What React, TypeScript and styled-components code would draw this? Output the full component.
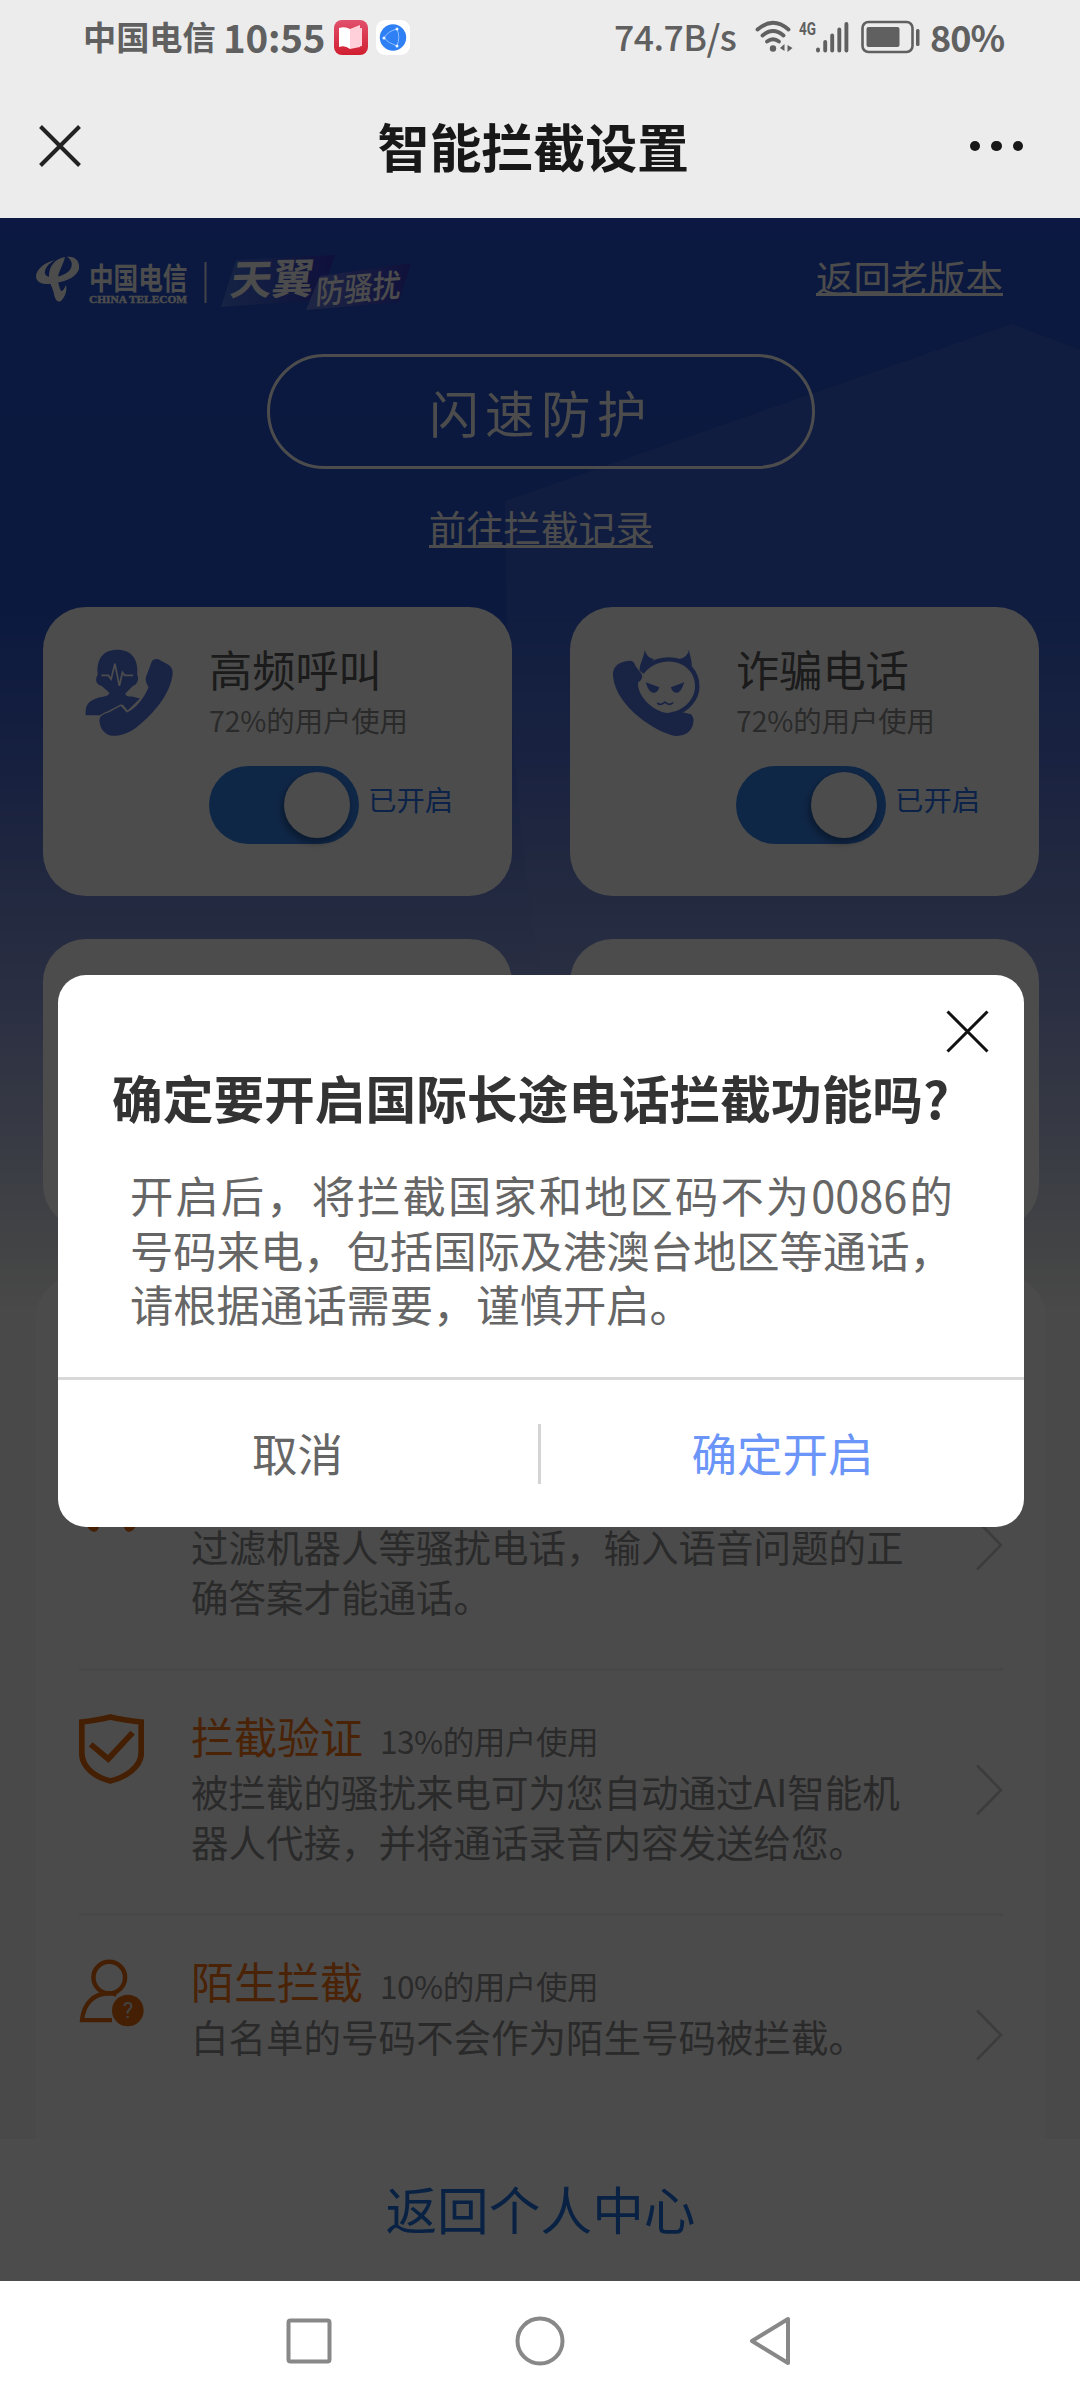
import React from "react";
import styled, { createGlobalStyle } from "styled-components";

const GlobalStyle = createGlobalStyle`
  * { box-sizing: border-box; }
  body {
    margin: 0;
    background: #fff;
    font-family: "Noto Sans CJK SC", "Noto Sans", sans-serif;
  }
`;

const Screen = styled.div`
  width: 1080px;
  height: 2400px;
  display: flex;
  flex-direction: column;
  white-space: nowrap;
`;

/* ---------- status bar and title bar ---------- */

const StatusBar = styled.div`
  height: 74px;
  padding: 0 77px 0 83px;
  display: flex;
  align-items: center;
  justify-content: space-between;
  background: #ececec;
  color: #606060;
`;

const StatusGroup = styled.div`
  display: flex;
  align-items: center;
`;

const StatusText = styled.span<{ $size: number; $width: number; $weight?: number; $gap?: number; $spacing?: number }>`
  width: ${(p) => p.$width}px;
  margin-left: ${(p) => p.$gap ?? 0}px;
  font-size: ${(p) => p.$size}px;
  font-weight: ${(p) => p.$weight ?? 500};
  letter-spacing: ${(p) => p.$spacing ?? 0}px;
  line-height: 70px;
  height: 73px;
`;

const StatusIcon = styled.svg<{ $gap?: number }>`
  margin-left: ${(p) => p.$gap ?? 0}px;
  flex: none;
`;

const TitleBar = styled.header`
  height: 144px;
  padding: 0 57px 0 39px;
  display: flex;
  align-items: center;
  justify-content: space-between;
  background: #ececec;
`;

const BarTitle = styled.h1`
  margin: 0;
  padding-left: 16px;
  font-size: 52px;
  line-height: 136px;
  font-weight: 700;
  letter-spacing: -0.1px;
  color: #181818;
`;

const More = styled.div`
  display: flex;
  gap: 11px;
  span {
    width: 10.5px;
    height: 10.5px;
    border-radius: 50%;
    background: #181818;
  }
`;

/* ---------- page ---------- */

const Page = styled.main`
  position: relative;
  height: 2063px;
  overflow: hidden;
  background: linear-gradient(
    180deg,
    #2850dc 0px,
    #2553d2 60px,
    #2654d2 380px,
    #4a6ad4 540px,
    #7088d4 670px,
    #909ede 790px,
    #c8d0e6 960px,
    #dde0e6 1020px,
    #f3f3f3 1090px
  );
`;

const Backdrop = styled.svg`
  position: absolute;
  left: 0;
  top: 0;
`;

const PageBody = styled.div`
  position: relative;
  display: flex;
  flex-direction: column;
  align-items: center;
`;

const BrandRow = styled.div`
  align-self: stretch;
  height: 136px;
  padding: 22px 77px 0 36px;
  display: flex;
  justify-content: space-between;
  align-items: flex-start;
`;

const TextLink = styled.a`
  color: #fff;
  font-size: 37.4px;
  border-bottom: 3px solid #fff;
`;

const BrandLink = styled(TextLink)`
  height: 38px;
  line-height: 38px;
  margin-top: 18px;
`;

const RecordLink = styled(TextLink)`
  margin: 39px 0 0 2px;
  height: 40px;
  line-height: 39px;
`;

const ShieldButton = styled.button`
  width: 548px;
  height: 115px;
  margin-left: 2px;
  padding: 0;
  border: 3px solid #fff;
  border-radius: 58px;
  background: none;
  color: #fff;
  font-family: inherit;
  font-size: 49.5px;
  line-height: 105px;
  letter-spacing: 6.4px;
`;

const CardGrid = styled.section`
  align-self: stretch;
  margin-top: 59px;
  padding: 0 41px 0 43px;
  display: grid;
  grid-template-columns: 469px 469px;
  grid-auto-rows: 289px;
  gap: 43px 58px;
`;

const Card = styled.article`
  padding: 42px 0 0 42px;
  border-radius: 43px;
  background: #fff;
  display: flex;
  gap: 36px;
`;

const CardBody = styled.div`
  display: flex;
  flex-direction: column;
`;

const CardName = styled.h2`
  margin: -4px 0 0;
  font-size: 43.2px;
  line-height: 46px;
  font-weight: 400;
  color: #5a5a5a;
`;

const CardUsage = styled.p`
  margin: 9px 0 0;
  font-size: 28.4px;
  line-height: 40px;
  letter-spacing: -0.1px;
  color: #8e8e8e;
`;

const SwitchRow = styled.div`
  margin-top: 26px;
  height: 78px;
  display: flex;
  align-items: flex-start;
  gap: 9px;
  color: #2874f0;
  font-size: 28.4px;
  line-height: 66px;
`;

const Switch = styled.span`
  width: 150px;
  height: 78px;
  padding: 6px 9px;
  border-radius: 39px;
  background: #3583ee;
  display: flex;
  justify-content: flex-end;
`;

const Knob = styled.span`
  width: 66px;
  height: 66px;
  border-radius: 50%;
  background: #fff;
  box-shadow: -2px 4px 8px rgba(0, 0, 0, 0.4);
`;

const List = styled.section`
  align-self: stretch;
  height: 920px;
  margin: 47px 34px 0 36px;
  padding: 151px 43px 0;
  border-radius: 43px;
  background: #fcfcfc;
`;

const ListItem = styled.div<{ $last?: boolean }>`
  height: 245px;
  padding-top: 44px;
  display: flex;
  border-bottom: ${(p) => (p.$last ? "none" : "3px solid #eeeeee")};
`;

const ItemIcon = styled.div`
  width: 112px;
  margin-top: -1px;
`;

const ItemBody = styled.div`
  flex: 1;
`;

const ItemHead = styled.div`
  display: flex;
  align-items: baseline;
  gap: 17px;
  height: 48px;
  line-height: 40px;
`;

const ItemName = styled.h3`
  margin: 0;
  font-size: 43px;
  font-weight: 400;
  color: #f87414;
`;

const ItemUsage = styled.span`
  font-size: 31.6px;
  letter-spacing: -0.5px;
  color: #8c8c8c;
`;

const ItemText = styled.p`
  margin: 3px 0 0;
  font-size: 37.5px;
  line-height: 50px;
  color: #8c8c8c;
`;

const ItemArrow = styled.svg`
  margin-top: 49px;
`;

const Footer = styled.footer`
  position: absolute;
  left: 0;
  right: 0;
  bottom: 0;
  height: 142px;
  padding-left: 1px;
  display: flex;
  justify-content: center;
  background: #fff;
  color: #2074e4;
  font-size: 51.7px;
  line-height: 138px;
`;

/* ---------- dialog ---------- */

const Mask = styled.div`
  position: absolute;
  inset: 0;
  background: rgba(0, 0, 0, 0.7);
  display: flex;
  justify-content: center;
  align-items: flex-start;
  padding: 757px 0 0 2px;
`;

const Dialog = styled.div`
  width: 966px;
  height: 552px;
  border-radius: 28px;
  background: #fff;
  display: flex;
  flex-direction: column;
`;

const DialogClose = styled.div`
  height: 77px;
  padding: 35px 35px 0 0;
  display: flex;
  justify-content: flex-end;
`;

const DialogTitle = styled.h2`
  margin: 13px 0 0 54px;
  font-size: 50.7px;
  line-height: 64px;
  font-weight: 700;
  color: #333;
`;

const DialogText = styled.p`
  width: 822.8px;
  height: 210px;
  margin: 38px 0 0 72px;
  font-size: 43.3px;
  line-height: 54.5px;
  text-align: justify;
  white-space: normal;
  color: #666;
`;

const DialogActions = styled.div`
  flex: 1;
  display: flex;
  align-items: center;
  border-top: 3px solid #d8d8d8;
`;

const Action = styled.button<{ $primary?: boolean }>`
  flex: 1;
  padding: 0 0 4px;
  border: 0;
  background: none;
  font-family: inherit;
  font-size: 45.5px;
  line-height: 64px;
  color: ${(p) => (p.$primary ? "#6b95f8" : "#666")};
`;

const CancelAction = styled(Action)`
  flex: 0 0 480px;
  padding-right: 1px;
`;

const Separator = styled.span`
  width: 3px;
  height: 60px;
  background: #d4d4d4;
`;

const NavBar = styled.nav`
  height: 119px;
  padding: 0 288px 0 286px;
  display: flex;
  align-items: center;
  justify-content: space-between;
  background: #fff;
`;

/* ---------- drawings ---------- */

const BLUE = "#5578e6";
const ORANGE = "#e46a0e";

const Cross = ({ size, width, color }: { size: number; width: number; color: string }) => (
  <svg width={size} height={size} viewBox={`0 0 ${size} ${size}`}>
    <path
      d={`M1.5 1.5 L${size - 1.5} ${size - 1.5} M${size - 1.5} 1.5 L1.5 ${size - 1.5}`}
      stroke={color}
      strokeWidth={width}
      fill="none"
    />
  </svg>
);

const BookApp = () => (
  <StatusIcon $gap={9} width="34" height="35" viewBox="0 0 34 35">
    <defs>
      <linearGradient id="book" x1="0" y1="0" x2="0" y2="1">
        <stop offset="0" stopColor="#e2506c" />
        <stop offset="1" stopColor="#d01f30" />
      </linearGradient>
    </defs>
    <rect width="34" height="35" rx="8" fill="url(#book)" />
    <path d="M16 9 L26 5 V27 L16 29Z M18 9 L28 8 V26 L18 28Z" fill="#ffd0da" />
    <path d="M5 8 Q11 6 16 9 V29 Q11 25 5 27Z" fill="#fff" />
  </StatusIcon>
);

const BrowserApp = () => (
  <StatusIcon $gap={8} width="34" height="35" viewBox="0 0 34 35">
    <rect width="34" height="35" rx="9" fill="#fff" />
    <circle cx="17" cy="17.5" r="13.2" fill="#2f80f5" />
    <path d="M21 9 Q12 11 8 18 Q12 23 21 26 Q24.500 17 21 9" fill="none" stroke="#8cc0ff" strokeWidth="1" />
    <circle cx="21" cy="9" r="1.500" fill="#e8f4ff" />
    <circle cx="8" cy="18" r="1.500" fill="#e8f4ff" />
    <circle cx="21" cy="26" r="1.500" fill="#e8f4ff" />
  </StatusIcon>
);

const Wifi = () => (
  <StatusIcon $gap={20} width="40" height="34" viewBox="0 0 40 34">
    <g fill="none" stroke="#606060" strokeWidth="3.800" strokeLinecap="round">
      <path d="M2.500 9.500 Q18 -4 33.500 9.500" />
      <path d="M7.500 15.500 Q18 6.500 28.500 15.500" />
      <path d="M12 21.500 Q18 17 24 21.500" />
    </g>
    <circle cx="18" cy="28.500" r="3.200" fill="#606060" />
    <path d="M29.500 24 V31 L25 28Z M32.500 25 V32 L37.500 28Z" fill="#606060" />
  </StatusIcon>
);

const Signal = () => (
  <StatusIcon $gap={4} width="52" height="34" viewBox="0 0 52 34">
    <text x="0" y="15" fontSize="18" fontWeight="700" textLength="17" lengthAdjust="spacingAndGlyphs" fill="#606060" fontFamily="Roboto, sans-serif">
      4G
    </text>
    <g stroke="#606060" strokeWidth="3.900" strokeLinecap="round">
      <path d="M19 29.500 V30.500 M26.200 22 V30.500 M33.200 15.500 V30.500 M40.300 9.500 V30.500 M47.400 4 V30.500" />
    </g>
  </StatusIcon>
);

const Battery = () => (
  <StatusIcon $gap={10} width="60" height="34" viewBox="0 0 60 34">
    <rect x="1.500" y="2" width="50" height="30" rx="6" fill="none" stroke="#606060" strokeWidth="2.600" />
    <rect x="5.500" y="7" width="33" height="20" rx="2" fill="#606060" />
    <rect x="55" y="9" width="3.500" height="17" rx="1.500" fill="#606060" />
  </StatusIcon>
);

const BrandLogo = () => (
  <svg width="380" height="84" viewBox="0 -10 380 84" fontFamily='"Noto Sans CJK SC", sans-serif'>
    <defs>
      <linearGradient id="tagA" x1="0" y1="0" x2="1" y2="0">
        <stop offset="0" stopColor="#5a8af0" />
        <stop offset="1" stopColor="#3a28c0" />
      </linearGradient>
      <linearGradient id="tagB" x1="0" y1="0" x2="1" y2="0">
        <stop offset="0" stopColor="#7c90ee" />
        <stop offset="1" stopColor="#3a30c4" />
      </linearGradient>
    </defs>
    <g fill="#fff">
      <path d="M19 10 C8 13 0 19 0 27 C1 35 12 35 20 33 C32 31 41 26 43 19 C44 11 39 6 31 7 C37 10 37 17 33 21 C27 27 12 30 9 24 C8 19 12 14 19 10Z" />
      <path d="M29 7 C18 9 13 17 13 26 C13 33 17 38 18 44 C19 50 22 53 25 51 C30 46 31 40 30 35 C28 39 27 41 25 41 C23 37 22 33 22 29 C22 21 27 16 29 7Z" />
    </g>
    <g fill="#fff">
      <g transform="translate(53 0) scale(1 1.22)">
        <text x="0" y="32" fontSize="24.600" fontWeight="700">中国电信</text>
      </g>
      <text x="53" y="53" fontSize="10" fontWeight="700" textLength="98" lengthAdjust="spacingAndGlyphs" fontFamily='"Liberation Serif", serif' stroke="#fff" strokeWidth="0.400">
        CHINA TELECOM
      </text>
      <rect x="168.500" y="12" width="2" height="41" opacity="0.85" />
    </g>
    <path d="M200 10 L299 5 L284 50 L185 57Z" fill="url(#tagA)" opacity="0.65" />
    <path d="M284 26 L375 13 L363 52 L270 60Z" fill="url(#tagB)" opacity="0.75" />
    <g fill="#fff">
      <text transform="translate(193 45) rotate(-1) skewX(-9)" x="0" y="0" fontSize="41.500" fontWeight="700">天翼</text>
      <text transform="translate(279 54) rotate(-5) skewX(-9) scale(1 1.12)" x="0" y="0" fontSize="28.500" fontWeight="500">防骚扰</text>
    </g>
  </svg>
);

const CallerIcon = () => (
  <svg width="88" height="87" viewBox="248 208 256 260" preserveAspectRatio="none">
    <path
      fill={BLUE}
      d="M285 285 C280 236 302 210 342 210 C382 210 404 236 400 285 C407 298 398 316 388 318 L366 340 C364 347 372 350 384 350 L408 356 L372 392 L358 374 L292 406 L250 406 C248 376 255 364 290 352 C310 350 320 346 318 338 L296 318 C280 315 276 298 285 285Z"
    />
    <path d="M296 287 H316 L324 298 L335 252 L348 318 L357 278 L364 287 H388" fill="none" stroke="#fff" strokeWidth="5" />
    <path
      fill={BLUE}
      stroke="#fff"
      strokeWidth="8"
      paintOrder="stroke"
      d="M443 243 Q454 234 468 242 L492 256 Q504 266 503 282 C497 342 448 402 400 440 C375 460 350 469 325 467 C303 464 290 442 290 422 C290 408 302 402 318 397 L352 378 L370 398 C395 385 420 355 433 322 Q421 306 426 290Z"
    />
  </svg>
);

const DevilIcon = () => (
  <svg width="88" height="87" viewBox="210 208 256 260" preserveAspectRatio="none">
    <path d="M297 278 C345 212 458 232 458 320 C458 355 432 388 396 400" fill="none" stroke={BLUE} strokeWidth="13" />
    <path d="M290 272 C290 250 303 235 305 210 Q310 234 332 238 L300 276Z M404 238 Q430 234 434 210 C436 230 446 245 441 276Z" fill={BLUE} />
    <path
      fill={BLUE}
      d="M213 290 C210 262 228 245 262 243 Q274 243 278 258 L297 284 Q301 297 286 308 C283 342 318 385 362 398 C378 402 388 392 402 394 L440 403 Q450 414 446 432 C440 457 420 468 395 468 C340 458 222 382 213 290Z"
    />
    <path d="M308 307 L348 322 Q342 340 330 339 Q316 336 308 307Z M420 307 L381 322 Q387 340 399 339 Q412 336 420 307Z" fill={BLUE} />
    <path d="M342 369 Q350 379 364 367 Q378 379 388 368" fill="none" stroke={BLUE} strokeWidth="5" />
    <path d="M350 387 L364 376 L378 387 L364 397Z" fill="#fff" />
  </svg>
);

const HeadsetIcon = () => (
  <svg width="65" height="64" viewBox="0 0 65 64" fill="none" stroke={ORANGE} strokeWidth="5.500">
    <path d="M6 40 V28 C8 -4 57 -4 59 28 V40" />
    <ellipse cx="13" cy="49" rx="6" ry="12.500" transform="rotate(-12 13 49)" fill={ORANGE} strokeWidth="3" />
    <ellipse cx="52" cy="49" rx="6" ry="12.500" transform="rotate(12 52 49)" fill={ORANGE} strokeWidth="3" />
  </svg>
);

const ShieldIcon = () => (
  <svg width="65" height="70" viewBox="229 222 189 210" preserveAspectRatio="none" fill="none" stroke={ORANGE}>
    <path d="M237 246 Q285 240 320 231 Q357 240 410 246 V338 C410 384 360 413 320 423 C280 413 237 384 237 338Z" strokeWidth="17" />
    <path d="M263 313 L314 357 L385 278" strokeWidth="17" />
  </svg>
);

const StrangerIcon = () => (
  <svg width="65" height="68" viewBox="229 956 189 198" preserveAspectRatio="none">
    <g fill="none" stroke={ORANGE} strokeWidth="13">
      <ellipse cx="317" cy="1010" rx="46" ry="46" />
      <path d="M325 1134 H238 C242 1088 270 1056 317 1056 Q330 1056 338 1060" />
    </g>
    <circle cx="371" cy="1106" r="46" fill={ORANGE} />
    <text x="371" y="1129" textAnchor="middle" fontSize="64" fill="#ddd" fontFamily="Roboto, sans-serif">
      ?
    </text>
  </svg>
);

const Arrow = () => (
  <ItemArrow width="27" height="52" viewBox="0 0 27 52">
    <path d="M1 1.500 L25 26 L1 50.500" fill="none" stroke="#c8c8c8" strokeWidth="2.600" />
  </ItemArrow>
);

/* ---------- content ---------- */

const cards = [
  { name: "高频呼叫", icon: <CallerIcon /> },
  { name: "诈骗电话", icon: <DevilIcon /> },
];

const items = [
  { name: "", usage: "", lines: ["过滤机器人等骚扰电话，输入语音问题的正", "确答案才能通话。"], icon: <HeadsetIcon /> },
  { name: "拦截验证", usage: "13%的用户使用", lines: ["被拦截的骚扰来电可为您自动通过AI智能机", "器人代接，并将通话录音内容发送给您。"], icon: <ShieldIcon /> },
  { name: "陌生拦截", usage: "10%的用户使用", lines: ["白名单的号码不会作为陌生号码被拦截。"], icon: <StrangerIcon /> },
];

export default function App() {
  return (
    <Screen>
      <GlobalStyle />
      <StatusBar>
        <StatusGroup>
          <StatusText $size={33.2} $width={134} $weight={700}>中国电信</StatusText>
          <StatusText $size={38.5} $width={102} $gap={6} $weight={700} $spacing={-0.2}>10:55</StatusText>
          <BookApp />
          <BrowserApp />
        </StatusGroup>
        <StatusGroup>
          <StatusText $size={35.5} $width={121} $weight={500} $spacing={-0.5}>74.7B/s</StatusText>
          <Wifi />
          <Signal />
          <Battery />
          <StatusText $size={36} $width={73} $gap={9} $weight={700} $spacing={-1}>80%</StatusText>
        </StatusGroup>
      </StatusBar>
      <TitleBar>
        <Cross size={42} width={4} color="#222" />
        <BarTitle>智能拦截设置</BarTitle>
        <More>
          <span />
          <span />
          <span />
        </More>
      </TitleBar>

      <Page>
        <Backdrop width="1080" height="1100" viewBox="0 0 1080 1100">
          <defs>
            <linearGradient id="fade" x1="0" y1="0" x2="0" y2="1">
              <stop offset="0" stopColor="#fff" stopOpacity="0.09" />
              <stop offset="0.5" stopColor="#fff" stopOpacity="0.07" />
              <stop offset="1" stopColor="#fff" stopOpacity="0" />
            </linearGradient>
          </defs>
          <path d="M505 283 L1012 106 L1080 132 V860 H560 Q505 600 505 283Z" fill="url(#fade)" />
        </Backdrop>
        <PageBody>
          <BrandRow>
            <BrandLogo />
            <BrandLink>返回老版本</BrandLink>
          </BrandRow>
          <ShieldButton>闪速防护</ShieldButton>
          <RecordLink>前往拦截记录</RecordLink>
          <CardGrid>
            {cards.map((card) => (
              <Card key={card.name}>
                {card.icon}
                <CardBody>
                  <CardName>{card.name}</CardName>
                  <CardUsage>72%的用户使用</CardUsage>
                  <SwitchRow>
                    <Switch>
                      <Knob />
                    </Switch>
                    已开启
                  </SwitchRow>
                </CardBody>
              </Card>
            ))}
            <Card />
            <Card />
          </CardGrid>
          <List>
            {items.map((item, i) => (
              <ListItem key={i} $last={i === items.length - 1}>
                <ItemIcon>{item.icon}</ItemIcon>
                <ItemBody>
                  <ItemHead>
                    {item.name && <ItemName>{item.name}</ItemName>}
                    {item.usage && <ItemUsage>{item.usage}</ItemUsage>}
                  </ItemHead>
                  <ItemText>
                    {item.lines.map((line, n) => (
                      <React.Fragment key={line}>
                        {n > 0 && <br />}
                        {line}
                      </React.Fragment>
                    ))}
                  </ItemText>
                </ItemBody>
                <Arrow />
              </ListItem>
            ))}
          </List>
        </PageBody>
        <Footer>返回个人中心</Footer>
        <Mask>
          <Dialog>
            <DialogClose>
              <Cross size={43} width={3} color="#111" />
            </DialogClose>
            <DialogTitle>确定要开启国际长途电话拦截功能吗?</DialogTitle>
            <DialogText>
              开启后，将拦截国家和地区码不为0086的号码来电，包括国际及港澳台地区等通话，请根据通话需要，谨慎开启。
            </DialogText>
            <DialogActions>
              <CancelAction>取消</CancelAction>
              <Separator />
              <Action $primary>确定开启</Action>
            </DialogActions>
          </Dialog>
        </Mask>
      </Page>

      <NavBar>
        <svg width="46" height="46" viewBox="0 0 46 46">
          <rect x="2.500" y="2.500" width="41" height="41" rx="2" fill="none" stroke="#888" strokeWidth="4" />
        </svg>
        <svg width="50" height="50" viewBox="0 0 50 50">
          <circle cx="25" cy="25" r="22.500" fill="none" stroke="#888" strokeWidth="4" />
        </svg>
        <svg width="44" height="50" viewBox="0 0 44 50">
          <path d="M40 3 V47 L4 25Z" fill="none" stroke="#888" strokeWidth="4" strokeLinejoin="round" />
        </svg>
      </NavBar>
    </Screen>
  );
}
